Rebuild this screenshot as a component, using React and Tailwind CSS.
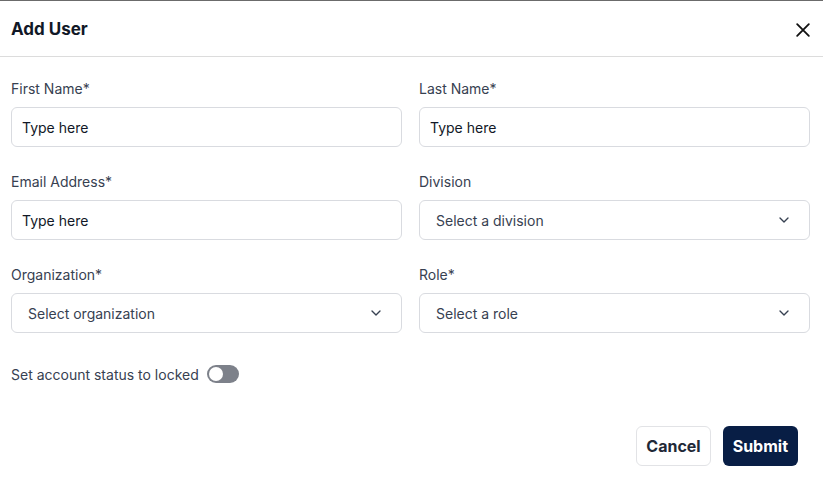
import React from "react";

function Chevron() {
  return (
    <svg width="16" height="16" viewBox="0 0 24 24" fill="none" stroke="#374151" strokeWidth="2" strokeLinecap="round" strokeLinejoin="round">
      <path d="M6 9l6 6 6-6" />
    </svg>
  );
}

function Field({ label, children }) {
  return (
    <div className="flex flex-col">
      <label className="text-[14px] leading-5 text-[#374151]">{label}</label>
      <div className="mt-2">{children}</div>
    </div>
  );
}

function TextInput() {
  return (
    <div className="h-10 rounded-md border border-[#d9dbe0] flex items-center px-[10px] text-[14px] text-[#111827]">
      Type here
    </div>
  );
}

function Select({ text }) {
  return (
    <div className="h-10 rounded-md border border-[#d9dbe0] flex items-center justify-between pl-4 pr-[17px] text-[14px] text-[#374151]">
      <span>{text}</span>
      <Chevron />
    </div>
  );
}

export default function App() {
  return (
    <div className="w-[823px] h-[496px] bg-white border-t border-[#6b6b6b] flex flex-col" style={{ fontFamily: "Inter, 'Liberation Sans', sans-serif" }}>
      <div className="h-[56px] border-b border-[#dcdcdc] flex items-center justify-between pl-[11px] pr-[10px]">
        <h2 className="text-[17px] font-bold text-[#111827] mt-[2px]">Add User</h2>
        <svg width="20" height="20" viewBox="0 0 24 24" fill="none" stroke="#111" strokeWidth="2.2" strokeLinecap="round" className="mt-[2px]">
          <path d="M5 5l14 14M19 5L5 19" />
        </svg>
      </div>
      <div className="pl-[11px] pr-[13px] pt-[22px]">
        <div className="grid grid-cols-2 gap-x-[17px] gap-y-[25px]">
          <Field label="First Name*"><TextInput /></Field>
          <Field label="Last Name*"><TextInput /></Field>
          <Field label="Email Address*"><TextInput /></Field>
          <Field label="Division"><Select text="Select a division" /></Field>
          <Field label="Organization*"><Select text="Select organization" /></Field>
          <Field label="Role*"><Select text="Select a role" /></Field>
        </div>
        <div className="mt-[31px] flex items-center gap-2 h-5">
          <span className="text-[14px] text-[#374151]">Set account status to locked</span>
          <div className="w-8 h-[18px] rounded-full bg-[#7d818a] flex items-center px-[2px]">
            <div className="w-[14px] h-[14px] rounded-full bg-white" />
          </div>
        </div>
        <div className="mt-[42px] flex justify-end gap-[12px] pr-[12px]">
          <button className="h-10 px-[9px] rounded-md border border-[#e2e3e6] bg-white text-[16px] font-bold text-[#1f2937]">Cancel</button>
          <button className="h-10 px-[10px] rounded-md bg-[#081e45] text-[16px] font-bold text-white">Submit</button>
        </div>
      </div>
    </div>
  );
}
